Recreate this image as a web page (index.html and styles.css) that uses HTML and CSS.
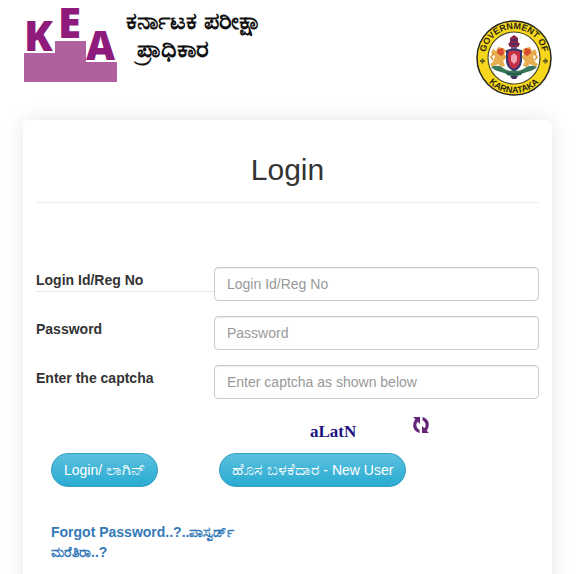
FILE: index.html
```html
<!DOCTYPE html>
<html lang="en">
<head>
    <meta charset="UTF-8">
    <meta name="viewport" content="width=device-width, initial-scale=1.0">
    <title>KEA Login</title>
    <link rel="stylesheet" href="styles.css">
</head>
<body>
    <header class="site-header">
        <div class="brand">
            <svg class="kea-logo" width="94" height="76" viewBox="0 0 94 76" role="img" aria-label="KEA">
                <path d="M1 46H32V34H63V55H94V75H1Z" fill="#b0609f"/>
                <g class="kea-letters">
                    <text x="1" y="44" font-size="42">K</text>
                    <text x="35" y="31" font-size="42">E</text>
                    <text x="63" y="53" font-size="40">A</text>
                </g>
            </svg>
            <div class="brand-name" lang="kn">ಕರ್ನಾಟಕ ಪರೀಕ್ಷಾ<span>ಪ್ರಾಧಿಕಾರ</span></div>
        </div>
        <svg class="emblem" width="76" height="76" viewBox="0 0 76 76" role="img" aria-label="Government of Karnataka">
            <defs>
                <path id="arcTop" d="M9 38A29 29 0 0 1 67 38"/>
                <path id="arcBottom" d="M3 38A35 35 0 0 0 73 38"/>
            </defs>
            <circle cx="38" cy="38" r="37" fill="#f6d71c" stroke="#25251d" stroke-width="1.5"/>
            <circle cx="38" cy="38" r="26" fill="#fff" stroke="#4b4a2c" stroke-width="1.2"/>
            <g class="emblem-text">
                <text><textPath href="#arcTop" startOffset="50%">GOVERNMENT OF</textPath></text>
                <text><textPath href="#arcBottom" startOffset="50%">KARNATAKA</textPath></text>
            </g>
            <path d="M4 41h5M6.500 38.500v5M67 41h5M69.500 38.500v5" stroke="#6b641c" stroke-width="2"/>
            <!-- lions on both sides -->
            <g id="lion">
                <path d="M31 31L27 28L22 27L20 31L17 29L15 33L19 36L17 42L14 44L16 47L22 44L25 47L29 46L27 41L31 37L28 34Z" fill="#e8ad4e"/>
                <path d="M22 29L27 28L28 34L25 36L21 33Z" fill="#d64a2d"/>
                <path d="M18 33L15 37L17 40" fill="none" stroke="#d9973a" stroke-width="1.500"/>
            </g>
            <use href="#lion" transform="translate(76 0) scale(-1 1)"/>
            <!-- base -->
            <path d="M15 47Q22 44 27 48Q32 52 38 50Q44 52 49 48Q54 44 61 47Q57 51 51 52L45 54H31L25 52Q19 51 15 47Z" fill="#39785a"/>
            <path d="M29 51Q38 55 47 51L45 55Q38 57 31 55Z" fill="#245f4b"/>
            <path d="M34 56h8l-2 3h-4Z" fill="#3c3862"/>
            <!-- shield and crest -->
            <path d="M31 31Q38 28 45 31V41Q44 48 38 50Q32 48 31 41Z" fill="#c72f49" stroke="#32366f" stroke-width="2"/>
            <path d="M35 36l3-3 3 3v5l-3 3-3-3Z" fill="#f1a4b2"/>
            <path d="M34 27l-2-3 2-2v-4l4-3 4 3v4l2 2-2 3Z" fill="#8d2448"/>
            <path d="M35 20h6M34 24h8M35 28h6" stroke="#3c356c" stroke-width="1.500"/>
        </svg>
    </header>

    <main class="login-card">
        <h2 class="login-title">Login</h2>
        <form class="login-form">
            <div class="form-row">
                <label class="first-label" for="loginId">Login Id/Reg No</label>
                <input type="text" id="loginId" placeholder="Login Id/Reg No">
            </div>
            <div class="form-row">
                <label for="password">Password</label>
                <input type="password" id="password" placeholder="Password">
            </div>
            <div class="form-row">
                <label for="captcha">Enter the captcha</label>
                <input type="text" id="captcha" placeholder="Enter captcha as shown below">
            </div>
            <div class="captcha-row">
                <span class="captcha-code">aLatN</span>
                <button type="button" class="refresh" aria-label="Refresh captcha">
                    <svg width="18" height="18" viewBox="0 0 18 18">
                        <path d="M1 1H8V8L5.700 5.700C3.500 8 4 12 7.500 13.800V17C0 15 0 7.500 3.300 3.300Z" fill="#642477"/>
                        <path d="M17 17H10V10L12.300 12.300C14.500 10 14 6 10.500 4.200V1C18 3 18 10.500 14.700 14.700Z" fill="#642477"/>
                    </svg>
                </button>
            </div>
            <div class="button-row">
                <div><button type="submit" class="btn">Login/ <span class="kn" lang="kn">ಲಾಗಿನ್</span></button></div>
                <div><button type="button" class="btn"><span class="kn" lang="kn">ಹೊಸ ಬಳಕೆದಾರ</span> - New User</button></div>
            </div>
            <a class="forgot" href="#">Forgot Password..?..ಪಾಸ್ವರ್ಡ್ ಮರೆತಿರಾ..?</a>
        </form>
    </main>
</body>
</html>
```
FILE: styles.css
```css
* {
    box-sizing: border-box;
}
body {
    margin: 0;
    padding: 7px 26px 0 23px;
    font-family: "Liberation Sans", Arial, sans-serif;
    font-size: 14px;
    line-height: 20px;
    color: #333;
    background-color: #fff;
    overflow-x: hidden;
}
.site-header {
    display: flex;
    justify-content: space-between;
    height: 113px;
}
.brand {
    display: flex;
    gap: 9px;
}
.kea-logo {
    overflow: visible;
}
.kea-letters {
    font-family: "Open Sans", "Liberation Sans", sans-serif;
    font-weight: 800;
    fill: #8e1b7c;
}
.brand-name {
    font-size: 24px;
    font-weight: bold;
    line-height: 28px;
    color: #111;
    white-space: nowrap;
}
.brand-name span {
    display: block;
    padding-left: 11px;
}
.emblem {
    margin-top: 13px;
}
.emblem-text {
    font-family: "Liberation Sans", Arial, sans-serif;
    font-size: 9px;
    font-weight: bold;
    text-anchor: middle;
    fill: #29260f;
}
.login-card {
    padding: 33px 13px 40px;
    border-radius: 6px;
    box-shadow: 0 0 20px rgba(0, 0, 0, 0.1);
}
.login-title {
    margin: 0;
    padding-bottom: 16px;
    border-bottom: 1px solid #eee;
    font-size: 30px;
    font-weight: normal;
    line-height: 33px;
    text-align: center;
}
.login-form {
    padding-top: 64px;
}
.form-row {
    display: grid;
    grid-template-columns: 178px 1fr;
    align-items: start;
    margin-bottom: 15px;
}
.form-row label {
    padding: 3px 0 1px;
    font-weight: bold;
}
.form-row .first-label {
    border-bottom: 1px solid #e5e5e5;
}
.form-row input {
    width: 100%;
    height: 34px;
    padding: 6px 12px;
    border: 1px solid #ccc;
    border-radius: 4px;
    font: inherit;
    color: #555;
    background-color: #fff;
    box-shadow: inset 0 1px 1px rgba(0, 0, 0, 0.075);
}
.form-row input::placeholder {
    color: #999;
}
.captcha-row {
    display: flex;
    gap: 56px;
    height: 39px;
    padding-left: 274px;
}
.captcha-code {
    padding-top: 8px;
    font-family: "Liberation Serif", "Times New Roman", serif;
    font-size: 17px;
    font-weight: bold;
    color: #1b1180;
}
.refresh {
    align-self: flex-start;
    padding: 2px 0 0;
    border: 0;
    background: none;
    line-height: 0;
    cursor: pointer;
}
.button-row {
    display: grid;
    grid-template-columns: 168px 1fr;
    padding-left: 15px;
}
.kn {
    font-size: 16px;
    line-height: 16px;
}
.btn {
    height: 34px;
    padding: 6px 12px;
    border: 1px solid #35a0c4;
    border-radius: 17px;
    font: inherit;
    color: #fff;
    white-space: nowrap;
    background-image: linear-gradient(#5bc0de, #2aabd2);
    cursor: pointer;
}
.forgot {
    display: block;
    width: 200px;
    margin: 35px 0 0 15px;
    font-weight: bold;
    color: #337ab7;
    text-decoration: none;
}
```
